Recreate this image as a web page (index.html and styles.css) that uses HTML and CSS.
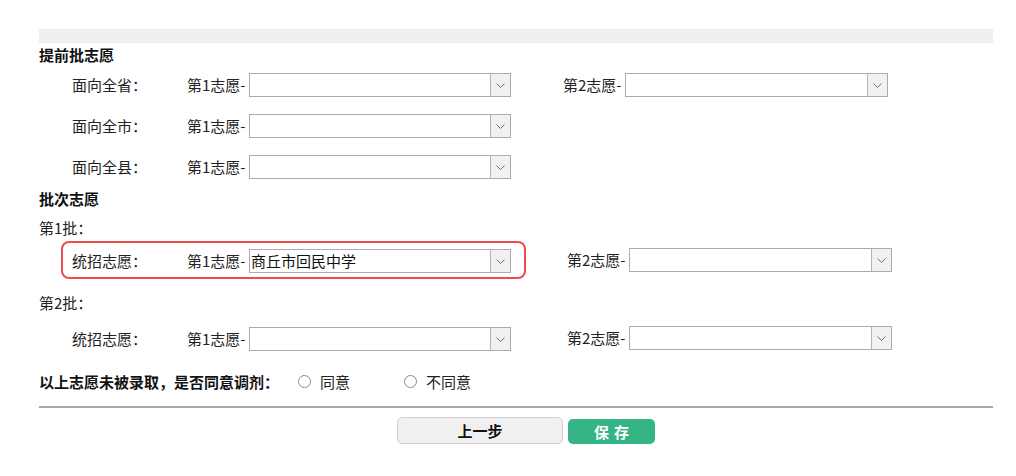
FILE: index.html
```html
<!DOCTYPE html>
<html lang="zh-CN">
<head>
<meta charset="utf-8">
<title>志愿填报</title>
<link rel="stylesheet" href="styles.css">
</head>
<body>
<div class="page">
  <div class="topbar"></div>

  <div class="section-title">提前批志愿</div>

  <div class="row">
    <span class="cat">面向全省：</span>
    <span class="choice-label">第1志愿-</span>
    <div class="select"><span class="select-value"></span><span class="select-arrow"><svg width="9" height="5" viewBox="0 0 9 5"><path d="M0.5 0.5 L4.5 4.5 L8.5 0.5" fill="none" stroke="#707070" stroke-width="1"/></svg></span></div>
    <span class="choice-label second">第2志愿-</span>
    <div class="select wide"><span class="select-value"></span><span class="select-arrow"><svg width="9" height="5" viewBox="0 0 9 5"><path d="M0.5 0.5 L4.5 4.5 L8.5 0.5" fill="none" stroke="#707070" stroke-width="1"/></svg></span></div>
  </div>

  <div class="row">
    <span class="cat">面向全市：</span>
    <span class="choice-label">第1志愿-</span>
    <div class="select"><span class="select-value"></span><span class="select-arrow"><svg width="9" height="5" viewBox="0 0 9 5"><path d="M0.5 0.5 L4.5 4.5 L8.5 0.5" fill="none" stroke="#707070" stroke-width="1"/></svg></span></div>
  </div>

  <div class="row">
    <span class="cat">面向全县：</span>
    <span class="choice-label">第1志愿-</span>
    <div class="select"><span class="select-value"></span><span class="select-arrow"><svg width="9" height="5" viewBox="0 0 9 5"><path d="M0.5 0.5 L4.5 4.5 L8.5 0.5" fill="none" stroke="#707070" stroke-width="1"/></svg></span></div>
  </div>

  <div class="section-title batch-title">批次志愿</div>

  <div class="batch-label first">第1批：</div>
  <div class="batch-row first">
    <div class="group highlighted">
      <span class="cat">统招志愿：</span>
      <span class="choice-label">第1志愿-</span>
      <div class="select"><span class="select-value">商丘市回民中学</span><span class="select-arrow"><svg width="9" height="5" viewBox="0 0 9 5"><path d="M0.5 0.5 L4.5 4.5 L8.5 0.5" fill="none" stroke="#707070" stroke-width="1"/></svg></span></div>
    </div>
    <span class="choice-label batch-second">第2志愿-</span>
    <div class="select wide"><span class="select-value"></span><span class="select-arrow"><svg width="9" height="5" viewBox="0 0 9 5"><path d="M0.5 0.5 L4.5 4.5 L8.5 0.5" fill="none" stroke="#707070" stroke-width="1"/></svg></span></div>
  </div>

  <div class="batch-label">第2批：</div>
  <div class="batch-row">
    <div class="group">
      <span class="cat">统招志愿：</span>
      <span class="choice-label">第1志愿-</span>
      <div class="select"><span class="select-value"></span><span class="select-arrow"><svg width="9" height="5" viewBox="0 0 9 5"><path d="M0.5 0.5 L4.5 4.5 L8.5 0.5" fill="none" stroke="#707070" stroke-width="1"/></svg></span></div>
    </div>
    <span class="choice-label batch-second">第2志愿-</span>
    <div class="select wide"><span class="select-value"></span><span class="select-arrow"><svg width="9" height="5" viewBox="0 0 9 5"><path d="M0.5 0.5 L4.5 4.5 L8.5 0.5" fill="none" stroke="#707070" stroke-width="1"/></svg></span></div>
  </div>

  <div class="adjust-row">
    <span class="adjust-label">以上志愿未被录取，是否同意调剂：</span>
    <label class="option"><span class="radio"></span>同意</label>
    <label class="option"><span class="radio"></span>不同意</label>
  </div>

  <div class="divider"></div>

  <div class="actions">
    <button class="btn btn-prev" type="button">上一步</button>
    <button class="btn btn-save" type="button">保存</button>
  </div>
</div>
</body>
</html>
```

FILE: styles.css
```css
html, body {
  margin: 0;
  padding: 0;
  background: #ffffff;
}

body {
  font-family: "Noto Sans CJK SC", "Noto Sans", "Liberation Sans", sans-serif;
  font-size: 15px;
  color: #222222;
}

.page {
  margin-left: 39px;
  width: 954px;
  padding-top: 29px;
}

.topbar {
  height: 14px;
  background: #efefef;
}

.section-title {
  font-weight: bold;
  color: #111111;
  line-height: 24px;
  height: 24px;
}

.row {
  display: flex;
  align-items: center;
  height: 24px;
  margin-top: 17px;
  padding-left: 33px;
}

.section-title + .row {
  margin-top: 6px;
}

.cat {
  width: 115px;
  flex: none;
  line-height: 24px;
}

.choice-label {
  width: 62px;
  flex: none;
  line-height: 24px;
  white-space: nowrap;
}

.choice-label.second {
  margin-left: 52px;
}

.choice-label.batch-second {
  margin-left: 41px;
}

.select {
  display: flex;
  width: 262px;
  height: 24px;
  box-sizing: border-box;
  border: 1px solid #ababab;
  background: #ffffff;
  flex: none;
}

.select.wide {
  width: 263px;
}

.select-value {
  flex: 1;
  padding-left: 1px;
  line-height: 22px;
  color: #111111;
  white-space: nowrap;
  overflow: hidden;
}

.select-arrow {
  width: 19px;
  border-left: 1px solid #b4b4b4;
  background: #f1f1f1;
  display: flex;
  align-items: center;
  justify-content: center;
}

.batch-title {
  margin-top: 8px;
}

.batch-label {
  line-height: 24px;
  height: 24px;
  margin-top: 12px;
}

.batch-label.first {
  margin-top: 5px;
}

.batch-row {
  display: flex;
  align-items: center;
  margin-top: 4px;
}

.batch-row.first {
  margin-top: 1px;
}

.group {
  display: flex;
  align-items: center;
  margin-left: 22px;
  border: 2px solid transparent;
  border-radius: 8px;
  padding: 6px 13px 4px 9px;
}

.group.highlighted {
  border-color: #ee4b4f;
}

.adjust-row {
  display: flex;
  align-items: center;
  height: 24px;
  margin-top: 12px;
}

.adjust-label {
  width: 259px;
  flex: none;
  font-weight: bold;
  color: #111111;
  white-space: nowrap;
}

.option {
  display: flex;
  align-items: center;
  width: 106px;
  flex: none;
  color: #222222;
}

.radio {
  width: 13px;
  height: 13px;
  box-sizing: border-box;
  border: 1px solid #8a8a8a;
  border-radius: 50%;
  background: #ffffff;
  margin-right: 9px;
}

.divider {
  height: 2px;
  margin-top: 13px;
  background: #a8a8a8;
}

.actions {
  display: flex;
  align-items: flex-end;
  margin-top: 9px;
  padding-left: 358px;
}

.btn {
  font-family: "Noto Sans CJK SC", "Noto Sans", sans-serif;
  font-size: 15px;
  font-weight: bold;
  padding: 0;
  cursor: pointer;
}

.btn-prev {
  width: 166px;
  height: 27px;
  border: 1px solid #cfcfcf;
  border-radius: 5px;
  background: #f0f0f0;
  color: #111111;
}

.btn-save {
  width: 87px;
  height: 25px;
  margin-left: 5px;
  border: none;
  border-radius: 5px;
  background: #35b485;
  color: #ffffff;
  letter-spacing: 5px;
  text-indent: 5px;
}
```
